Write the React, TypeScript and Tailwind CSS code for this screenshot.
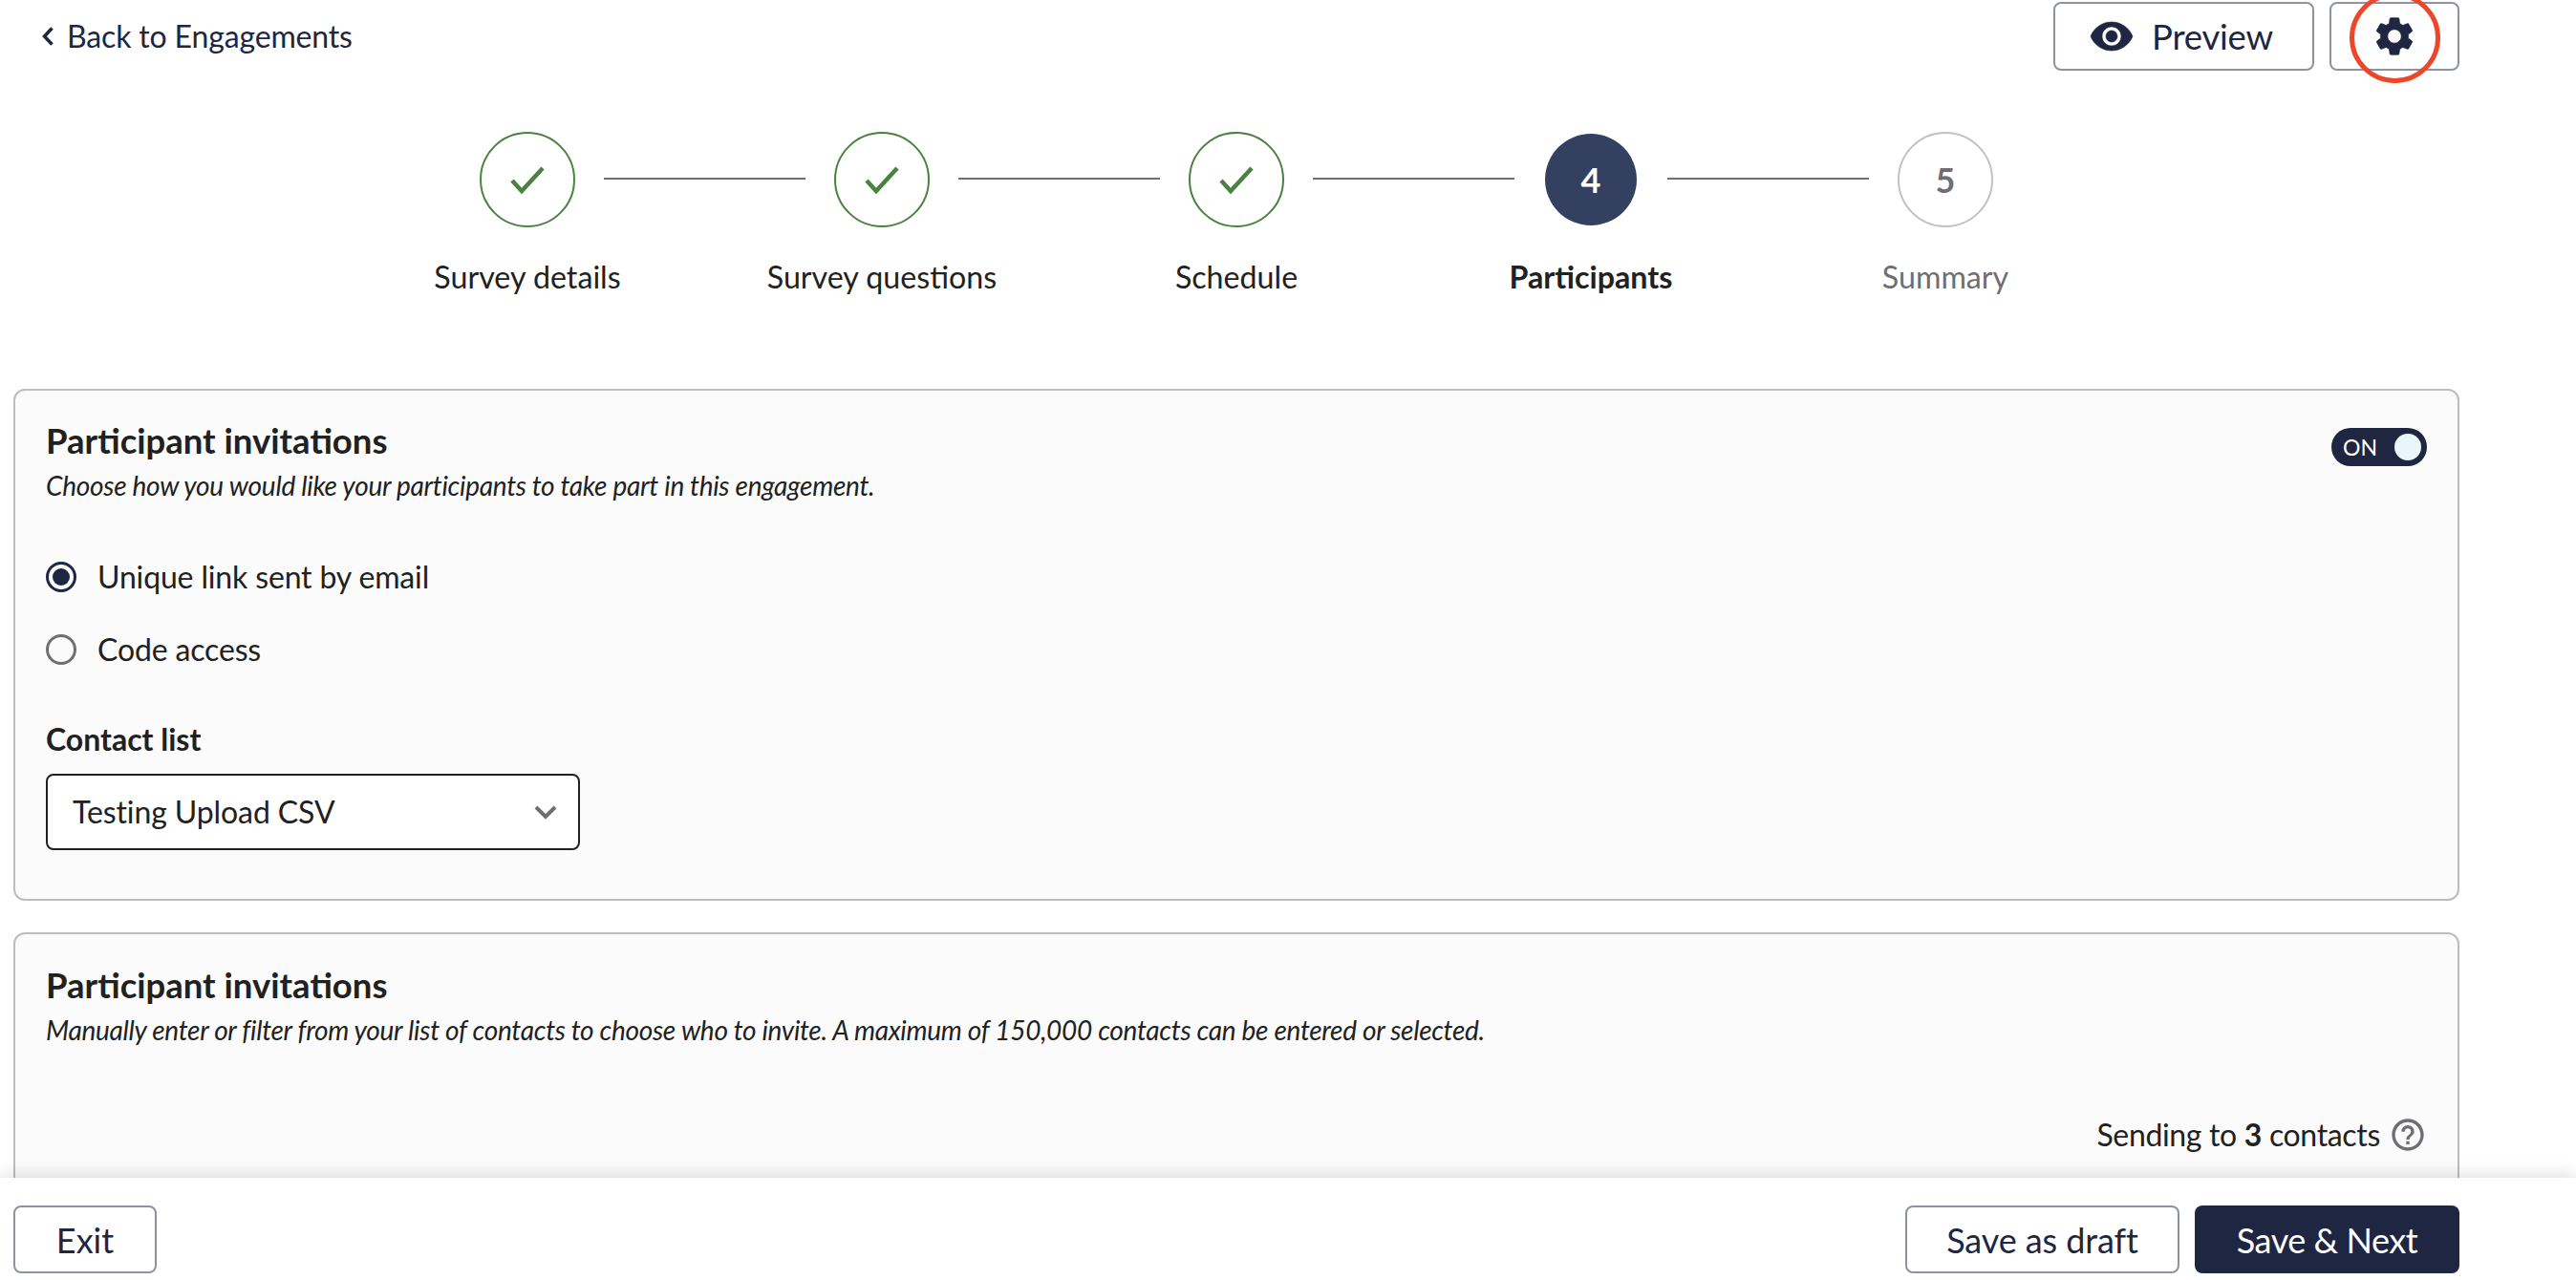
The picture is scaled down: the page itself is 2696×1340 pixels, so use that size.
import React from "react";

const GEAR = "M19.14,12.94c0.04-0.3,0.06-0.61,0.06-0.94c0-0.32-0.02-0.64-0.07-0.94l2.03-1.58c0.18-0.14,0.23-0.41,0.12-0.61 l-1.92-3.32c-0.12-0.22-0.37-0.29-0.59-0.22l-2.39,0.96c-0.5-0.38-1.03-0.7-1.62-0.94L14.4,2.81c-0.04-0.24-0.24-0.41-0.48-0.41 h-3.84c-0.24,0-0.43,0.17-0.47,0.41L9.25,5.35C8.66,5.59,8.12,5.92,7.63,6.29L5.24,5.33c-0.22-0.08-0.47,0-0.59,0.22L2.74,8.87 C2.62,9.08,2.66,9.34,2.86,9.48l2.03,1.58C4.84,11.36,4.8,11.69,4.8,12s0.02,0.64,0.07,0.94l-2.03,1.58 c-0.18,0.14-0.23,0.41-0.12,0.61l1.92,3.32c0.12,0.22,0.37,0.29,0.59,0.22l2.39-0.96c0.5,0.38,1.03,0.7,1.62,0.94l0.36,2.54 c0.05,0.24,0.24,0.41,0.48,0.41h3.84c0.24,0,0.44-0.17,0.47-0.41l0.36-2.54c0.59-0.24,1.13-0.56,1.62-0.94l2.39,0.96 c0.22,0.08,0.47,0,0.59-0.22l1.92-3.32c0.12-0.22,0.07-0.47-0.12-0.61L19.14,12.94z M12,15.6c-1.98,0-3.6-1.62-3.6-3.6 s1.62-3.6,3.6-3.6s3.6,1.62,3.6,3.6S13.98,15.6,12,15.6z";
const EYE = "M12 4.5C7 4.5 2.73 7.61 1 12c1.73 4.39 6 7.5 11 7.5s9.27-3.11 11-7.5c-1.73-4.39-6-7.5-11-7.5zM12 17c-2.76 0-5-2.24-5-5s2.24-5 5-5 5 2.24 5 5-2.24 5-5 5zm0-8c-1.66 0-3 1.34-3 3s1.34 3 3 3 3-1.34 3-3-1.34-3-3-3z";
const HELP = "M11 18h2v-2h-2v2zm1-16C6.48 2 2 6.48 2 12s4.48 10 10 10 10-4.48 10-10S17.52 2 12 2zm0 18c-4.41 0-8-3.59-8-8s3.59-8 8-8 8 3.59 8 8-3.59 8-8 8zm0-14c-2.21 0-4 1.79-4 4h2c0-1.1.9-2 2-2s2 .9 2 2c0 2-3 1.75-3 5h2c0-2.25 3-2.5 3-5 0-2.21-1.79-4-4-4z";

function Check() {
  return (
    <svg width="38" height="30" viewBox="0 0 38 30" fill="none">
      <path d="M3 16l10 11L35 3" stroke="#4a8240" strokeWidth="4.5" />
    </svg>
  );
}

function Line() {
  return <div className="w-[211px] h-[2px] mx-[30px] -mt-[2px] bg-[#6e6e73]" />;
}

function Label({ text, cls }: { text: string; cls: string }) {
  return (
    <div className={`w-[100px] flex justify-center whitespace-nowrap text-[32.2px] leading-[40px] ${cls}`}>{text}</div>
  );
}

function Done() {
  return (
    <div className="w-[100px] h-[100px] rounded-full border-2 border-[#4a8240] flex items-center justify-center shrink-0">
      <Check />
    </div>
  );
}

export default function App() {
  return (
    <div className="w-[2696px] h-[1340px] overflow-hidden flex flex-col bg-white font-['Lato','Liberation_Sans',sans-serif] text-[#212121]">
      <main className="flex-1 min-h-0 overflow-hidden">
        <div className="flex justify-between items-start pt-[2px] pl-[44px] pr-[122px]">
          <a className="flex items-center gap-[14px] h-[72px] text-[32px] tracking-[-0.15px] text-[#1e2642]">
            <svg width="12" height="20" viewBox="0 0 12 20" fill="none">
              <path d="M10.5 1.5L2.5 10l8 8.5" stroke="#1e2642" strokeWidth="3.5" />
            </svg>
            Back to Engagements
          </a>
          <div className="flex gap-[16px]">
            <button className="w-[273px] h-[72px] rounded-[8px] border-2 border-[#8e92a4] pr-[6px] flex items-center justify-center gap-[18px] text-[36.5px] tracking-[-0.2px] text-[#1e2642]">
              <svg width="48" height="48" viewBox="0 0 24 24" fill="#1e2642" stroke="#1e2642" strokeWidth="0.3">
                <path d={EYE} />
              </svg>
              Preview
            </button>
            <button className="relative w-[136px] h-[72px] rounded-[8px] border-2 border-[#8e92a4] flex items-center justify-center">
              <svg width="48" height="48" viewBox="0 0 24 24" fill="#1e2642" stroke="#1e2642" strokeWidth="0.4">
                <path d={GEAR} />
              </svg>
              <span className="absolute left-[19px] top-[-12px] w-[95px] h-[95px] rounded-full border-[5px] border-[#ee4628]" />
            </button>
          </div>
        </div>

        <div className="mt-[64px] pl-[502px]">
          <div className="flex items-center">
            <Done />
            <Line />
            <Done />
            <Line />
            <Done />
            <Line />
            <div className="w-[96px] h-[96px] mx-[2px] rounded-full bg-[#344060] flex items-center justify-center text-white text-[36px] font-bold shrink-0">
              4
            </div>
            <Line />
            <div className="w-[100px] h-[100px] rounded-full border-2 border-[#c2c2c2] flex items-center justify-center text-[#6e6e73] text-[36px] font-bold shrink-0">
              5
            </div>
          </div>
          <div className="flex gap-[271px] mt-[32px]">
            <Label text="Survey details" cls="" />
            <Label text="Survey questions" cls="" />
            <Label text="Schedule" cls="" />
            <Label text="Participants" cls="font-bold" />
            <Label text="Summary" cls="text-[#6e6e73]" />
          </div>
        </div>

        <section className="mt-[97px] ml-[14px] mr-[122px] h-[536px] rounded-[12px] border-2 border-[#bdbdbd] bg-[#fbfbfb] pt-[29px] px-[32px]">
          <div className="flex justify-between items-start">
            <div>
              <h2 className="text-[36.5px] leading-[46px] font-bold">Participant invitations</h2>
              <p className="text-[28px] leading-[36px] italic tracking-[-0.28px] mt-[6px]">
                Choose how you would like your participants to take part in this engagement.
              </p>
            </div>
            <div className="mt-[10px] w-[100px] h-[40px] rounded-full bg-[#1e2642] flex items-center justify-between pl-[12px] pr-[6px] text-white text-[23px]">
              ON
              <span className="w-[28px] h-[28px] rounded-full bg-[#e9f6f9]" />
            </div>
          </div>
          <div className="mt-[58px] flex items-center gap-[22px] h-[40px] text-[32px] tracking-[-0.15px]">
            <span className="w-[32px] h-[32px] rounded-full border-[3px] border-[#1e2642] flex items-center justify-center">
              <span className="w-[18px] h-[18px] rounded-full bg-[#1e2642]" />
            </span>
            Unique link sent by email
          </div>
          <div className="mt-[36px] flex items-center gap-[22px] h-[40px] text-[32px] tracking-[-0.15px]">
            <span className="w-[32px] h-[32px] rounded-full border-[3px] border-[#6e6e73]" />
            Code access
          </div>
          <div className="mt-[54px] text-[32px] leading-[40px] font-bold">Contact list</div>
          <div className="mt-[16px] w-[559px] h-[80px] rounded-[8px] border-2 border-[#212121] bg-white flex items-center justify-between pl-[26px] pr-[22px] text-[32px] tracking-[-0.1px]">
            Testing Upload CSV
            <svg width="24" height="16" viewBox="0 0 24 16" fill="none">
              <path d="M2 3l10 10L22 3" stroke="#6e6e73" strokeWidth="4" />
            </svg>
          </div>
        </section>

        <section className="mt-[33px] ml-[14px] mr-[122px] h-[400px] rounded-[12px] border-2 border-[#bdbdbd] bg-[#fbfbfb] pt-[30px] px-[32px]">
          <h2 className="text-[36.5px] leading-[46px] font-bold">Participant invitations</h2>
          <p className="text-[28px] leading-[36px] italic tracking-[-0.3px] mt-[6px]">
            Manually enter or filter from your list of contacts to choose who to invite. A maximum of 150,000 contacts can be entered or selected.
          </p>
          <div className="mt-[72px] flex justify-end items-center gap-[9px] text-[32px] leading-[40px] tracking-[-0.33px]">
            <span>
              Sending to <b>3</b> contacts
            </span>
            <svg width="40" height="40" viewBox="0 0 24 24" fill="#6e6e73">
              <path d={HELP} />
            </svg>
          </div>
        </section>
      </main>

      <footer className="relative h-[107px] shrink-0 bg-white shadow-[0_-4px_16px_rgba(0,0,0,0.12)] flex justify-between items-start pt-[29px] pl-[14px] pr-[122px] text-[36px]">
        <button className="w-[150px] h-[71px] rounded-[8px] border-2 border-[#8e92a4] text-[#1e2642]">Exit</button>
        <div className="flex gap-[16px]">
          <button className="w-[287px] h-[71px] rounded-[8px] border-2 border-[#8e92a4] text-[#1e2642] tracking-[-0.1px]">Save as draft</button>
          <button className="w-[277px] h-[71px] rounded-[8px] bg-[#1e2642] text-white tracking-[-0.45px]">Save &amp; Next</button>
        </div>
      </footer>
    </div>
  );
}
